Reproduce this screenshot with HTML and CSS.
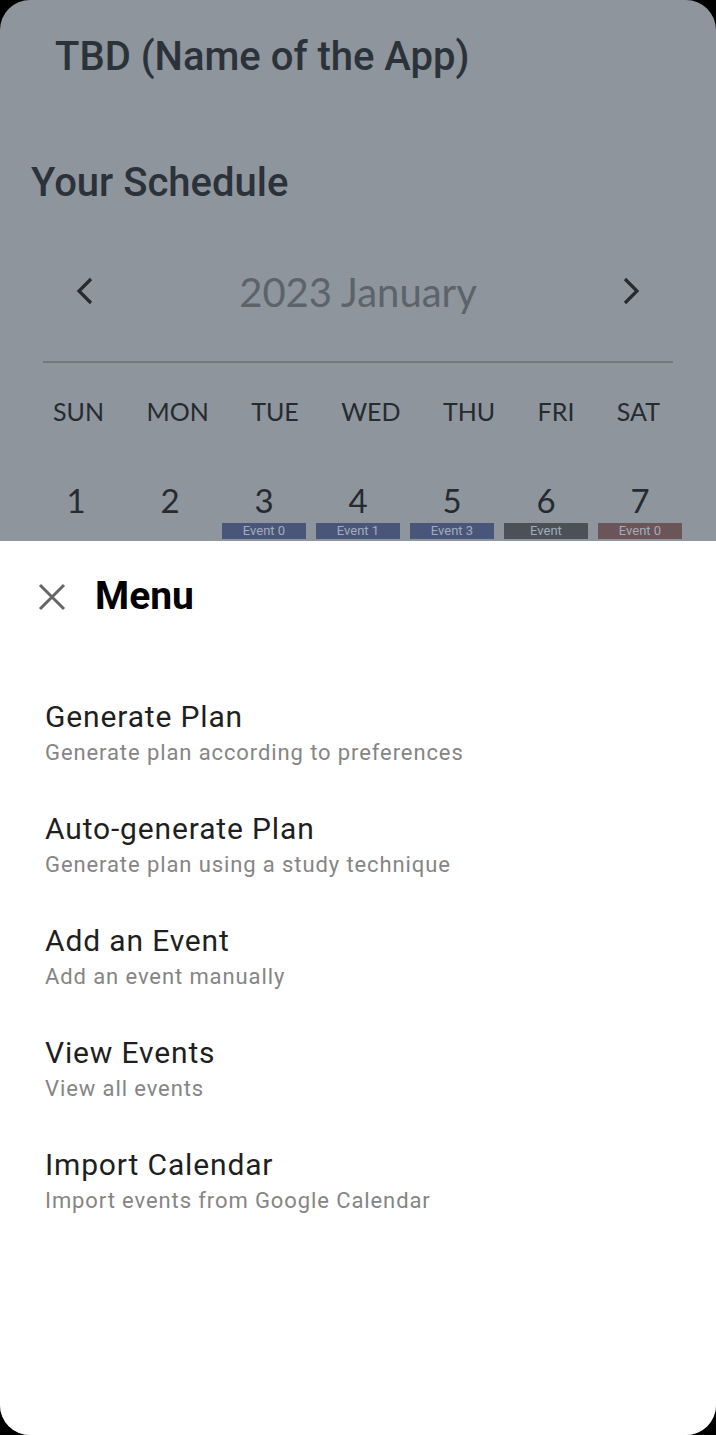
FILE: index.html
```html
<!DOCTYPE html>
<html lang="en">
<head>
<meta charset="utf-8">
<title>TBD - Menu</title>
<link rel="stylesheet" href="styles.css">
</head>
<body>
<div class="screen">
  <div class="backdrop">
    <h1 class="app-title">TBD (Name of the App)</h1>
    <h2 class="section-title">Your Schedule</h2>
    <div class="month-nav">
      <svg class="chev" width="20" height="30" viewBox="0 0 20 30"><path d="M16 3 L4 15 L16 27" fill="none" stroke="#262b31" stroke-width="3.2" stroke-linejoin="miter"/></svg>
      <div class="month">2023 January</div>
      <svg class="chev" width="20" height="30" viewBox="0 0 20 30"><path d="M4 3 L16 15 L4 27" fill="none" stroke="#262b31" stroke-width="3.2" stroke-linejoin="miter"/></svg>
    </div>
    <div class="divider"></div>
    <div class="weekdays">
      <span>SUN</span><span>MON</span><span>TUE</span><span>WED</span><span>THU</span><span>FRI</span><span>SAT</span>
    </div>
    <div class="days">
      <div class="day"><div class="num">1</div></div>
      <div class="day"><div class="num">2</div></div>
      <div class="day"><div class="num">3</div><div class="ev ev-blue">Event 0</div></div>
      <div class="day"><div class="num">4</div><div class="ev ev-blue">Event 1</div></div>
      <div class="day"><div class="num">5</div><div class="ev ev-blue">Event 3</div></div>
      <div class="day"><div class="num">6</div><div class="ev ev-dark">Event</div></div>
      <div class="day"><div class="num">7</div><div class="ev ev-red">Event 0</div></div>
    </div>
  </div>
  <div class="sheet">
    <div class="sheet-head">
      <svg class="close" width="28" height="28" viewBox="0 0 28 28"><path d="M2 2 L26 26 M26 2 L2 26" stroke="#666666" stroke-width="3" fill="none"/></svg>
      <div class="sheet-title">Menu</div>
    </div>
    <ul class="menu">
      <li class="item"><div class="item-title">Generate Plan</div><div class="item-sub">Generate plan according to preferences</div></li>
      <li class="item"><div class="item-title">Auto-generate Plan</div><div class="item-sub">Generate plan using a study technique</div></li>
      <li class="item"><div class="item-title">Add an Event</div><div class="item-sub">Add an event manually</div></li>
      <li class="item"><div class="item-title">View Events</div><div class="item-sub">View all events</div></li>
      <li class="item"><div class="item-title">Import Calendar</div><div class="item-sub">Import events from Google Calendar</div></li>
    </ul>
  </div>
</div>
</body>
</html>
```
FILE: styles.css
```css
* { box-sizing: border-box; }
html, body { margin: 0; padding: 0; background: #000; }
.screen {
  width: 716px;
  height: 1435px;
  border-radius: 30px;
  overflow: hidden;
  background: #8e959c;
  display: flex;
  flex-direction: column;
  font-family: Roboto, "Liberation Sans", sans-serif;
}
.backdrop {
  height: 541px;
  flex: none;
  display: flex;
  flex-direction: column;
}
.app-title {
  margin: 37px 0 0 55px;
  font-size: 40px;
  line-height: 40px;
  font-weight: 500;
  color: #2c3239;
}
.section-title {
  margin: 86px 0 0 31px;
  font-size: 40px;
  line-height: 40px;
  font-weight: 500;
  color: #2c3239;
}
.month-nav {
  margin-top: 69px;
  padding: 0 75px;
  height: 40px;
  display: flex;
  align-items: center;
  justify-content: space-between;
}
.chev { display: block; margin-top: -2px; }
.month {
  font-family: Lato, "Liberation Sans", sans-serif;
  font-size: 40px;
  line-height: 40px;
  color: #5c636a;
}
.divider {
  margin: 49px 43px 0;
  height: 2px;
  background: #72797f;
}
.weekdays {
  margin-top: 36px;
  padding: 0 56px 0 53px;
  display: flex;
  justify-content: space-between;
  font-family: Lato, "Liberation Sans", sans-serif;
  font-size: 25px;
  line-height: 25px;
  color: #262b31;
}
.days {
  margin-top: 60px;
  padding: 0 34px;
  display: grid;
  grid-template-columns: repeat(7, 84px);
  column-gap: 10px;
}
.day {
  display: flex;
  flex-direction: column;
  align-items: center;
}
.num {
  font-family: Lato, "Liberation Sans", sans-serif;
  font-size: 33px;
  line-height: 33px;
  color: #262b31;
}
.ev {
  margin-top: 6px;
  width: 84px;
  height: 16px;
  font-size: 13px;
  line-height: 16px;
  text-align: center;
  color: #a2abbb;
}
.ev-blue { background: #4a5679; }
.ev-dark { background: #4b5157; }
.ev-red { background: #6c5559; }
.sheet {
  flex: 1;
  background: #ffffff;
}
.sheet-head {
  margin-top: 36px;
  padding-left: 38px;
  display: flex;
  align-items: center;
  gap: 29px;
}
.close { display: block; }
.sheet-title {
  font-size: 39px;
  line-height: 39px;
  font-weight: 700;
  color: #000;
}
.menu {
  list-style: none;
  margin: 83px 0 0;
  padding: 0 0 0 45px;
  display: flex;
  flex-direction: column;
  gap: 45px;
}
.item-title {
  font-size: 30px;
  line-height: 36px;
  letter-spacing: 0.85px;
  color: #1f1f1f;
}
.item-sub {
  margin-top: 5px;
  font-size: 22px;
  line-height: 26px;
  letter-spacing: 0.9px;
  color: #858585;
}
```
